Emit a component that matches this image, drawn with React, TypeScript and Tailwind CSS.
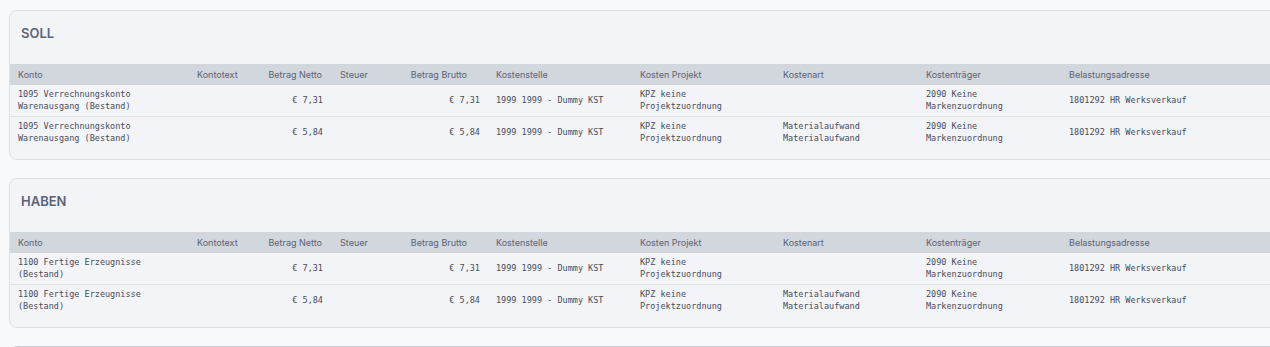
type Row = {
	konto: string[];
	netto: string;
	brutto: string;
	kostenstelle: string;
	projekt: string[];
	kostenart: string[];
	traeger: string[];
	adresse: string;
};

const sollRows: Row[] = [
	{
		konto: ["1095 Verrechnungskonto", "Warenausgang (Bestand)"],
		netto: "€ 7,31",
		brutto: "€ 7,31",
		kostenstelle: "1999 1999 - Dummy KST",
		projekt: ["KPZ keine", "Projektzuordnung"],
		kostenart: [],
		traeger: ["2090 Keine", "Markenzuordnung"],
		adresse: "1801292 HR Werksverkauf",
	},
	{
		konto: ["1095 Verrechnungskonto", "Warenausgang (Bestand)"],
		netto: "€ 5,84",
		brutto: "€ 5,84",
		kostenstelle: "1999 1999 - Dummy KST",
		projekt: ["KPZ keine", "Projektzuordnung"],
		kostenart: ["Materialaufwand", "Materialaufwand"],
		traeger: ["2090 Keine", "Markenzuordnung"],
		adresse: "1801292 HR Werksverkauf",
	},
];

const habenRows: Row[] = sollRows.map((row) => ({
	...row,
	konto: ["1100 Fertige Erzeugnisse", "(Bestand)"],
}));

function Lines({ lines }: { lines: string[] }) {
	return (
		<>
			{lines.map((line, i) => (
				<div key={i}>{line}</div>
			))}
		</>
	);
}

function BuchungCard({ title, rows }: { title: string; rows: Row[] }) {
	return (
		<section className="w-[1320px] rounded-lg border border-[#dcdfe5] bg-[#f3f4f8] pb-[12px]">
			<div className="h-[53px] pl-[11px] pt-[12px]">
				<h2 className="text-[13px] font-semibold leading-[20px] text-[#5b6378]">{title}</h2>
			</div>
			<table className="table-fixed border-collapse text-left">
				<colgroup>
					<col className="w-[179px]" />
					<col className="w-[71px]" />
					<col className="w-[72px]" />
					<col className="w-[60px]" />
					<col className="w-[96px]" />
					<col className="w-[144px]" />
					<col className="w-[143px]" />
					<col className="w-[143px]" />
					<col className="w-[143px]" />
					<col className="w-[267px]" />
				</colgroup>
				<thead>
					<tr className="h-[21px] bg-[#d2d6dd] text-[9px] text-[#5c6374]">
						<th className="px-2 font-normal">Konto</th>
						<th className="px-2 font-normal">Kontotext</th>
						<th className="pl-2 pr-[10px] text-right font-normal">Betrag Netto</th>
						<th className="px-2 font-normal">Steuer</th>
						<th className="pl-2 pr-[21px] text-right font-normal">Betrag Brutto</th>
						<th className="px-2 font-normal">Kostenstelle</th>
						<th className="px-2 font-normal">Kosten Projekt</th>
						<th className="px-2 font-normal">Kostenart</th>
						<th className="px-2 font-normal">Kostenträger</th>
						<th className="px-2 font-normal">Belastungsadresse</th>
					</tr>
				</thead>
				<tbody className="font-['DejaVu_Sans_Mono',monospace] text-[8.5px] leading-[12px] text-[#464c59]">
					{rows.map((row, i) => (
						<tr key={i} className="h-[31px] border-b border-[#dde0e5] last:border-b-0">
							<td className="px-2">
								<Lines lines={row.konto} />
							</td>
							<td className="px-2" />
							<td className="pl-2 pr-[9px] text-right">{row.netto}</td>
							<td className="px-2" />
							<td className="px-2 text-right">{row.brutto}</td>
							<td className="px-2">{row.kostenstelle}</td>
							<td className="px-2">
								<Lines lines={row.projekt} />
							</td>
							<td className="px-2">
								<Lines lines={row.kostenart} />
							</td>
							<td className="px-2">
								<Lines lines={row.traeger} />
							</td>
							<td className="px-2">{row.adresse}</td>
						</tr>
					))}
				</tbody>
			</table>
		</section>
	);
}

export default function App() {
	return (
		<div className="h-[347px] overflow-hidden bg-[#f8f9fb] pl-[9px] pt-[10px] font-['Inter',sans-serif]">
			<div className="flex flex-col gap-[18px]">
				<BuchungCard title="SOLL" rows={sollRows} />
				<BuchungCard title="HABEN" rows={habenRows} />
				<div className="h-[40px] w-[1320px] rounded-lg border border-[#c9cdd4] bg-[#f3f4f8]" />
			</div>
		</div>
	);
}
